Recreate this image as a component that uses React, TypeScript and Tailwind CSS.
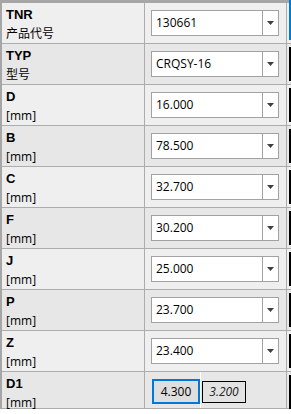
type Row = {
  code: string;
  label: string;
  value?: string;
};

const rows: Row[] = [
  { code: "TNR", label: "产品代号", value: "130661" },
  { code: "TYP", label: "型号", value: "CRQSY-16" },
  { code: "D", label: "[mm]", value: "16.000" },
  { code: "B", label: "[mm]", value: "78.500" },
  { code: "C", label: "[mm]", value: "32.700" },
  { code: "F", label: "[mm]", value: "30.200" },
  { code: "J", label: "[mm]", value: "25.000" },
  { code: "P", label: "[mm]", value: "23.700" },
  { code: "Z", label: "[mm]", value: "23.400" },
  { code: "D1", label: "[mm]" },
];

function Dropdown({ value }: { value: string }) {
  return (
    <div className="ml-[6px] mt-[7px] flex h-[26px] w-[128px] border border-[#a2a2a2] bg-white">
      <div className="flex-1 pl-[4px] text-[12px] leading-[24px] text-black">{value}</div>
      <div className="flex w-[16px] items-center justify-center border-l border-[#a2a2a2]">
        <svg width="7" height="4" viewBox="0 0 7 4">
          <path d="M0 0h7L3.5 4z" fill="#404040" />
        </svg>
      </div>
    </div>
  );
}

export default function App() {
  return (
    <div className="h-[414px] w-[291px] overflow-hidden bg-white font-['Open_Sans','Noto_Sans_CJK_SC',sans-serif]">
      <div className="border-l-2 border-t-[3px] border-[#a6a6a6]">
        {rows.map((r, i) => {
          const bg = i % 2 === 0 ? "bg-[#efefef]" : "bg-[#e7e7e7]";
          const last = i === rows.length - 1;
          return (
            <div
              key={r.code}
              className={`flex border-b border-[#acacac] ${bg} ${last ? "h-[37px]" : "h-[41px]"}`}
            >
              <div className="w-[143px] border-r border-[#acacac] pl-[4px] pt-[4px]">
                <p className="font-['Liberation_Sans',sans-serif] text-[13px] font-bold leading-[16px] text-black">
                  {r.code}
                </p>
                <p className="mt-[3px] text-[12px] leading-[16px] text-black">{r.label}</p>
              </div>
              <div className="flex w-[142px] border-r border-[#acacac]">
                {r.value ? (
                  <Dropdown value={r.value} />
                ) : (
                  <>
                    <div className="ml-[7px] mt-[7px] flex h-[25px] w-[48px] items-center justify-center border-2 border-[#0078d7] bg-[#dedede] text-[12px] text-black">
                      4.300
                    </div>
                    <div className="h-full w-px bg-white" />
                    <div className="ml-[1px] mt-[9px] flex h-[22px] w-[44px] items-center justify-center border border-black bg-[#e3e3e3] text-[12px] italic text-[#222]">
                      3.200
                    </div>
                  </>
                )}
              </div>
              <div className="flex-1 pl-[2px]">
                <div
                  className={
                    i === 0
                      ? "-mt-[3px] h-[40px] border-l-2 border-[#0078d7]"
                      : "mt-[3px] h-[34px] border-l-2 border-black"
                  }
                />
              </div>
            </div>
          );
        })}
      </div>
    </div>
  );
}
